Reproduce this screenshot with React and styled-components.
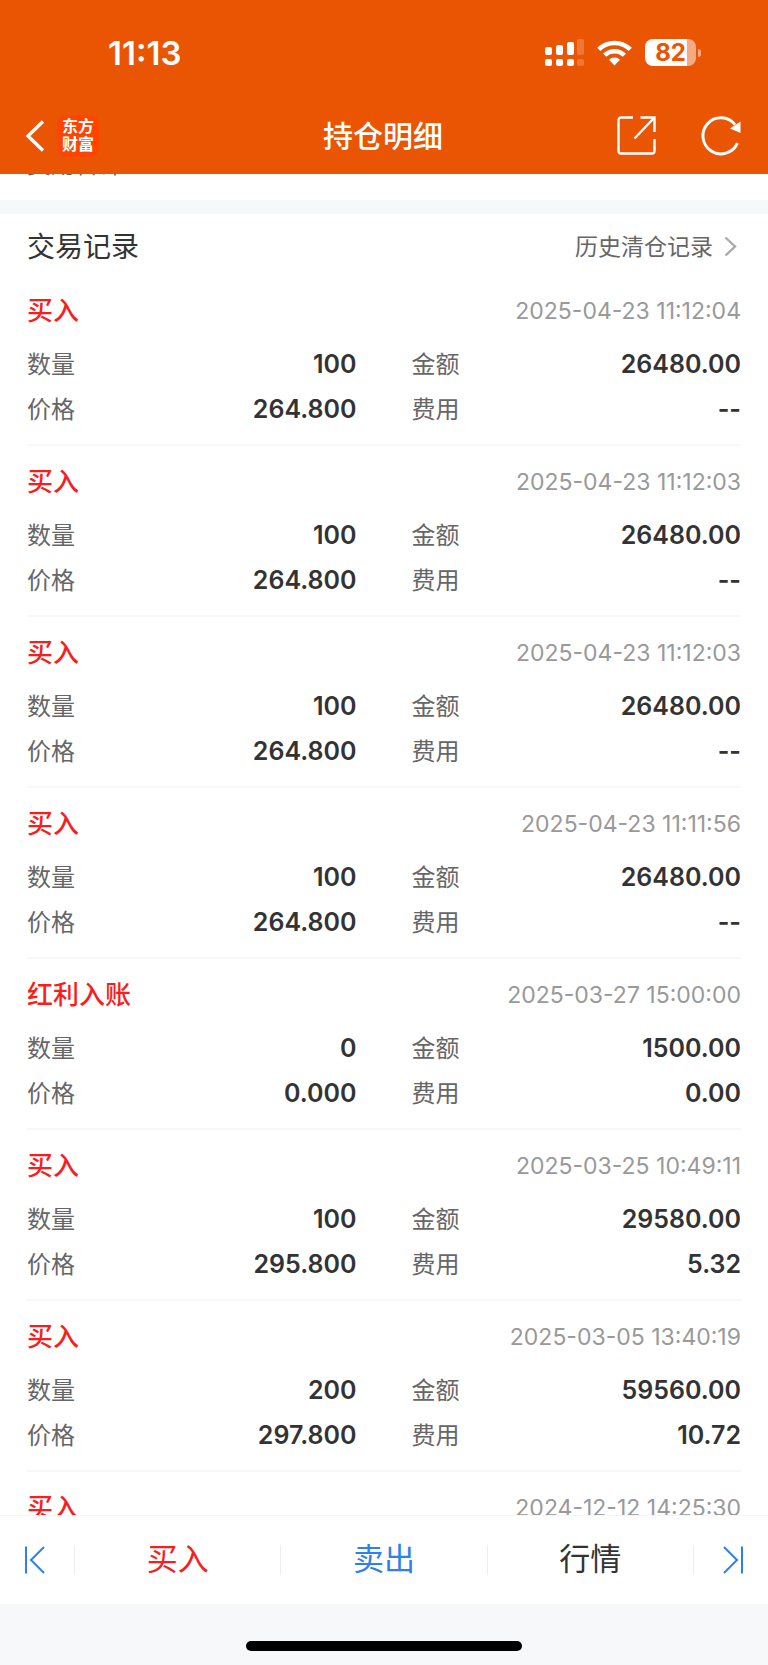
import React from 'react';
import styled, { createGlobalStyle } from 'styled-components';

const GlobalStyle = createGlobalStyle`
  * {
    box-sizing: border-box;
  }

  body {
    margin: 0;
    background: #f7f8fa;
    font-family: Inter, 'Noto Sans CJK SC', sans-serif;
    color: #333;
  }

  button {
    font: inherit;
    border: 0;
    padding: 0;
    background: none;
    cursor: pointer;
  }
`;

const Page = styled.div`
  height: 100vh;
  display: flex;
  flex-direction: column;
`;

const Header = styled.header`
  flex: none;
  background: #ea5504;
  color: #fff;
`;

const StatusBar = styled.div`
  height: 105px;
  padding: 0 67px 0 108px;
  display: flex;
  align-items: center;
  justify-content: space-between;
`;

const Clock = styled.time`
  font-size: 33px;
  font-weight: 600;
`;

const StatusIcons = styled.div`
  display: flex;
  align-items: center;
  gap: 13px;
`;

const Battery = styled.div`
  display: flex;
  align-items: center;
  gap: 2px;
`;

const BatteryBody = styled.div`
  width: 51px;
  height: 27px;
  border-radius: 8px;
  background: linear-gradient(to right, #fff 82%, rgba(255, 255, 255, 0.5) 82%);
  color: #ea5504;
  font-size: 24px;
  font-weight: 700;
  line-height: 27px;
  text-align: center;
`;

const BatteryTip = styled.div`
  width: 3px;
  height: 8px;
  border-radius: 0 4px 4px 0;
  background: rgba(255, 255, 255, 0.5);
`;

const NavBar = styled.div`
  height: 69px;
  padding: 0 27px 8px 25px;
  display: grid;
  grid-template-columns: 1fr auto 1fr;
  align-items: center;
`;

const NavSide = styled.div`
  display: flex;
  align-items: center;
  justify-content: ${({ $end }) => ($end ? 'flex-end' : 'flex-start')};
  gap: ${({ $end }) => ($end ? '45px' : '12px')};
`;

const IconButton = styled.button`
  display: flex;
  color: inherit;
`;

const Logo = styled.div`
  width: 42px;
  height: 42px;
  padding: 1px 0;
  border-radius: 9px;
  background: #ff4400;
  font-family: 'Noto Sans CJK SC', sans-serif;
  font-size: 16px;
  font-weight: 700;
  line-height: 18px;
  text-align: center;
`;

const NavTitle = styled.h1`
  margin: 0;
  padding-bottom: 4px;
  font-size: 30px;
  font-weight: 500;
`;

const Content = styled.main`
  flex: 1;
  min-height: 0;
  overflow: hidden;
  background: #fff;
`;

/* tail of the block that is scrolled away under the header */
const ScrolledBlock = styled.div`
  height: 64px;
  margin-top: -24px;
  padding: 0 27px;
  border-bottom: 14px solid #f7f8fa;
  color: #666;
  font-size: 24px;
  line-height: 30px;
`;

const SectionHeader = styled.div`
  height: 61px;
  padding: 4px 27px 0;
  display: flex;
  align-items: center;
  justify-content: space-between;
`;

const SectionTitle = styled.h2`
  margin: 0;
  padding-bottom: 4px;
  font-size: 28px;
  font-weight: 400;
`;

const HistoryLink = styled.a`
  display: flex;
  align-items: center;
  gap: 11px;
  color: #666;
  font-size: 23px;
  text-decoration: none;
`;

const HistoryText = styled.span`
  padding-bottom: 4px;
`;

const RecordList = styled.ul`
  list-style: none;
  margin: 0;
  padding: 0 27px;
`;

const Record = styled.li`
  padding: 13px 0;
  border-bottom: 2px solid #f8f8f8;
`;

const RecordHead = styled.div`
  height: 45px;
  margin-bottom: 8px;
  display: flex;
  align-items: center;
  justify-content: space-between;
`;

const RecordType = styled.h3`
  margin: 0;
  padding-bottom: 4px;
  color: #f71e1e;
  font-size: 26px;
  font-weight: 500;
`;

const RecordTime = styled.time`
  color: #999;
  font-size: 23px;
`;

const Fields = styled.dl`
  margin: 0;
  display: grid;
  grid-template-columns: 1fr 1fr;
  column-gap: 55px;
`;

const Field = styled.div`
  height: 45px;
  display: flex;
  align-items: center;
  justify-content: space-between;
`;

const Label = styled.dt`
  padding-bottom: 3px;
  color: #666;
  font-size: 24px;
`;

const Value = styled.dd`
  margin: 0;
  font-size: 25px;
  font-weight: 600;
`;

const TradeBar = styled.nav`
  flex: none;
  height: 89px;
  display: flex;
  align-items: center;
  background: #fff;
  border-top: 1px solid #f5f5f5;
`;

const StepButton = styled.button`
  width: 74px;
  padding: ${({ $last }) => ($last ? '0 0 0 4px' : '0 4px 0 0')};
  display: flex;
  justify-content: center;
  color: #2f80ed;
`;

const TradeButton = styled.button`
  flex: 1;
  padding-bottom: 2px;
  color: ${({ $color }) => $color};
  font-size: 31px;
  line-height: 30px;
`;

const Divider = styled.span`
  width: 1px;
  height: 30px;
  background: #eee;
`;

const HomeArea = styled.div`
  flex: none;
  height: 61px;
  display: flex;
  justify-content: center;
  align-items: flex-end;
  padding-bottom: 14px;
`;

const HomeIndicator = styled.div`
  width: 36%;
  height: 10px;
  border-radius: 5px;
  background: #000;
`;

const SignalIcon = () => (
  <svg width="39" height="27" viewBox="0 0 39 27" fill="#fff" aria-hidden="true">
    <rect x="0" y="8" width="7" height="8" rx="2" />
    <rect x="11" y="6" width="7" height="10" rx="2" />
    <rect x="22" y="3" width="7" height="13" rx="2" />
    <rect x="32" y="0" width="7" height="16" rx="2" opacity="0.2" />
    <rect x="0" y="20" width="7" height="7" rx="2" />
    <rect x="11" y="20" width="7" height="7" rx="2" />
    <rect x="22" y="20" width="7" height="7" rx="2" />
    <rect x="32" y="20" width="7" height="7" rx="2" opacity="0.2" />
  </svg>
);

const WifiIcon = () => (
  <svg width="35" height="26" viewBox="0 0 35 26" aria-hidden="true">
    <g fill="none" stroke="#fff" strokeWidth="4.6">
      <path d="M1.8 9.4a22.4 22.4 0 0 1 31.4 0" />
      <path d="M7.6 15.2a14.2 14.2 0 0 1 19.8 0" />
    </g>
    <path d="M12 19.8a8 8 0 0 1 11 0L17.5 25.4z" fill="#fff" />
  </svg>
);

const BackIcon = () => (
  <svg width="20" height="32" viewBox="0 0 20 32" fill="none" stroke="#fff" strokeWidth="3.4" aria-hidden="true">
    <path d="M18 1.5L3 16l15 14.5" />
  </svg>
);

const ShareIcon = () => (
  <svg width="39" height="39" viewBox="0 0 39 39" fill="none" stroke="#fff" strokeWidth="2.4" aria-hidden="true">
    <path d="M16 1.5H4a2.5 2.5 0 0 0-2.5 2.5v31a2.5 2.5 0 0 0 2.5 2.5h31a2.5 2.5 0 0 0 2.5-2.5V23" />
    <path d="M23.5 1.5h14V16" />
    <path d="M37 2L17.5 22.5" />
  </svg>
);

const RefreshIcon = () => (
  <svg width="40" height="40" viewBox="0 0 40 40" aria-hidden="true">
    <path d="M36.4 27.2A18 18 0 1 1 34 8.6" fill="none" stroke="#fff" strokeWidth="3" />
    <path d="M39.5 5.5V17L29 12.5z" fill="#fff" />
  </svg>
);

const MoreIcon = () => (
  <svg width="17" height="21" viewBox="0 0 17 21" fill="none" stroke="#aaa" strokeWidth="2.4" aria-hidden="true">
    <path d="M1.5 1.5L11 10.5l-9.5 9" />
  </svg>
);

const FirstIcon = () => (
  <svg width="20" height="28" viewBox="0 0 20 28" fill="none" stroke="currentColor" strokeWidth="2" aria-hidden="true">
    <path d="M1 0.5v27M19 1L6 14l13 13" />
  </svg>
);

const LastIcon = () => (
  <svg width="20" height="28" viewBox="0 0 20 28" fill="none" stroke="currentColor" strokeWidth="2" aria-hidden="true">
    <path d="M19 0.5v27M1 1l13 13L1 27" />
  </svg>
);

const records = [
  { type: '买入', time: '2025-04-23 11:12:04', count: '100', amount: '26480.00', price: '264.800', fee: '--' },
  { type: '买入', time: '2025-04-23 11:12:03', count: '100', amount: '26480.00', price: '264.800', fee: '--' },
  { type: '买入', time: '2025-04-23 11:12:03', count: '100', amount: '26480.00', price: '264.800', fee: '--' },
  { type: '买入', time: '2025-04-23 11:11:56', count: '100', amount: '26480.00', price: '264.800', fee: '--' },
  { type: '红利入账', time: '2025-03-27 15:00:00', count: '0', amount: '1500.00', price: '0.000', fee: '0.00' },
  { type: '买入', time: '2025-03-25 10:49:11', count: '100', amount: '29580.00', price: '295.800', fee: '5.32' },
  { type: '买入', time: '2025-03-05 13:40:19', count: '200', amount: '59560.00', price: '297.800', fee: '10.72' },
  { type: '买入', time: '2024-12-12 14:25:30' },
];

const fields = [
  ['数量', 'count'],
  ['金额', 'amount'],
  ['价格', 'price'],
  ['费用', 'fee'],
];

const RecordItem = ({ record }) => (
  <Record>
    <RecordHead>
      <RecordType>{record.type}</RecordType>
      <RecordTime>{record.time}</RecordTime>
    </RecordHead>
    {record.count && (
      <Fields>
        {fields.map(([label, key]) => (
          <Field key={key}>
            <Label>{label}</Label>
            <Value>{record[key]}</Value>
          </Field>
        ))}
      </Fields>
    )}
  </Record>
);

const App = () => {
  return (
    <Page>
      <GlobalStyle />
      <Header>
        <StatusBar>
          <Clock>11:13</Clock>
          <StatusIcons>
            <SignalIcon />
            <WifiIcon />
            <Battery>
              <BatteryBody>82</BatteryBody>
              <BatteryTip />
            </Battery>
          </StatusIcons>
        </StatusBar>
        <NavBar>
          <NavSide>
            <IconButton aria-label="返回"><BackIcon /></IconButton>
            <Logo>东方<br />财富</Logo>
          </NavSide>
          <NavTitle>持仓明细</NavTitle>
          <NavSide $end>
            <IconButton aria-label="分享"><ShareIcon /></IconButton>
            <IconButton aria-label="刷新"><RefreshIcon /></IconButton>
          </NavSide>
        </NavBar>
      </Header>

      <Content>
        <ScrolledBlock>费用合计</ScrolledBlock>
        <SectionHeader>
          <SectionTitle>交易记录</SectionTitle>
          <HistoryLink href="#history">
            <HistoryText>历史清仓记录</HistoryText>
            <MoreIcon />
          </HistoryLink>
        </SectionHeader>
        <RecordList>
          {records.map((record, i) => (
            <RecordItem key={i} record={record} />
          ))}
        </RecordList>
      </Content>

      <TradeBar>
        <StepButton aria-label="上一个"><FirstIcon /></StepButton>
        <Divider />
        <TradeButton $color="#f71e1e">买入</TradeButton>
        <Divider />
        <TradeButton $color="#2f80ed">卖出</TradeButton>
        <Divider />
        <TradeButton $color="#333">行情</TradeButton>
        <Divider />
        <StepButton $last aria-label="下一个"><LastIcon /></StepButton>
      </TradeBar>
      <HomeArea>
        <HomeIndicator />
      </HomeArea>
    </Page>
  );
};

export default App;
